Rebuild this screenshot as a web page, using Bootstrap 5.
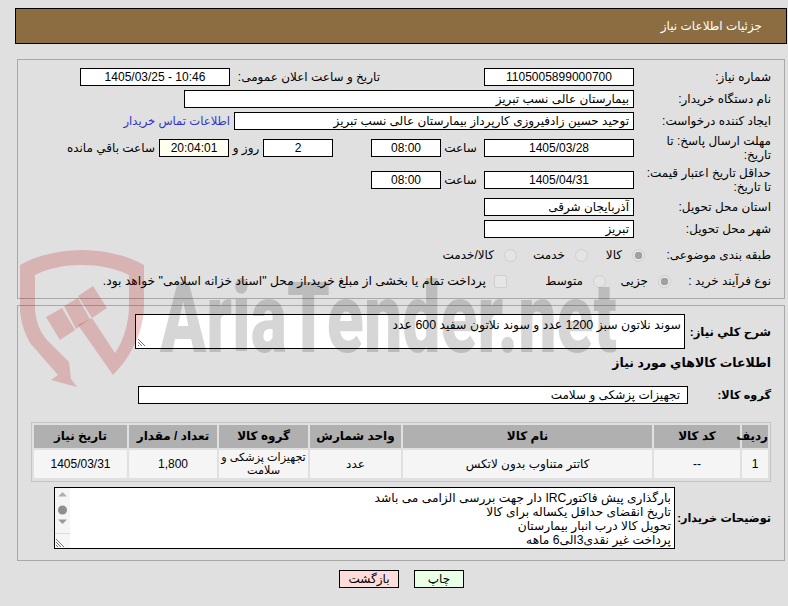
<!DOCTYPE html>
<html lang="fa" dir="rtl">
<head>
<meta charset="utf-8">
<title>جزئیات اطلاعات نیاز</title>
<link href="https://cdn.jsdelivr.net/npm/bootstrap@5.3.0/dist/css/bootstrap.min.css" rel="stylesheet">
<style>
html,body{height:606px;overflow:hidden}
body{background:#e0e0e0;color:#000;font-family:"Liberation Sans","DejaVu Sans",sans-serif;font-size:12px;line-height:14px;margin:0;position:relative;width:788px}
.page-head{background:#8c6d42;border:1px solid #000;color:#fff;height:36px;margin:8px 1px 0 15px;padding-inline-start:24px;font-size:12px}
.pane{border:1px solid #a8a8a8;margin-inline:3px 17px;position:relative}
.pane-a{height:240px;margin-top:15px;padding-top:8px}
.pane-b{height:256px;margin-top:6px;padding-top:8px}
.ln{display:flex;align-items:center;margin-bottom:4px;min-height:18px}
.ln-tall{min-height:28px}
.lbl{flex:none;width:150px;padding-inline-start:13px}
.lbl-bold{font-weight:700;font-size:11.3px;white-space:nowrap}
.lbl-wide{font-size:11.7px}
.bx{flex:none;background:#fff;border:1px solid #000;height:18px;line-height:16px;padding-inline:4px;overflow:hidden;white-space:nowrap}
.ctr{text-align:center}
.w-150{width:150px}.w-400{width:400px}.w-450{width:450px}.w-70{width:70px}
.gap-l{margin-inline-start:104px}
.lbl-mid{flex:none;width:150px;padding-inline-start:0}
.mm-4{margin-inline-start:4px}
.unit{flex:none;width:39px;padding-inline-start:0;text-align:center}
.after-bx{margin-inline-start:38px}
.roz{flex:none;width:34px;text-align:center}
.ylw{background:#fffff0}
.link-blue{color:#3333cc;text-decoration:none;margin-inline-start:4px;font-size:11.6px}
.opt-row{height:18px;margin-bottom:0}
.opt{flex:none;display:flex;align-items:center}
.rd{appearance:none;flex:none;width:13px;height:13px;border:1px solid #cfcfcf;border-radius:50%;background:#e4e4e4;margin:0 0 0 10px;position:relative}
.rd:checked{background:radial-gradient(circle,#a0a0a0 0 3.5px,#e4e4e4 4px)}
.cbx{appearance:none;flex:none;width:13px;height:13px;border:1px solid #cfcfcf;border-radius:2px;background:#e6e6e6;margin:0 0 0 8px}
.opt-long{font-size:12.3px}
.sub-title{font-weight:700;font-size:12.5px;padding-inline-start:13px;margin:7px 0 16px}
.txt-box{background:#fff;border:1px solid #000;position:relative;padding:3px 3px 0;flex:none;font-size:12.4px}
.ta-a{width:550px;height:35px;margin-inline-start:-51px}
.ta-b{width:621px;height:62px;margin-inline-start:-41px;font-size:12.2px}
.grip{position:absolute;left:1px;bottom:1px}
.bar{position:absolute;left:0;top:0;width:15px;height:100%;background:#f5f5f5}
.grid-wrap{border:1px solid #c4c4c4;margin-inline:13px 13px;margin-top:18px;margin-bottom:5px;height:60px;padding:0}
.tbl-x.table{border-collapse:separate;border-spacing:2px;margin:0;width:100%;table-layout:fixed;color:#000;font-size:12px}
.tbl-x.table>:not(caption)>*>*{background:#f5f5f5;border:0;padding:0;text-align:center;vertical-align:middle;line-height:13px;box-shadow:none;color:#000}
.tbl-x.table>thead>tr>th{background:#b0b0b0;height:23px;font-weight:700}
.tbl-x.table>tbody>tr>td{height:28px}
.tbl-x.table>tbody>tr>td.cell-tight{font-size:11.2px;white-space:nowrap}
.btn-row{display:flex;justify-content:flex-start;gap:15px;margin-top:9px;margin-inline-start:324px}
.act{border:1px solid #000;border-radius:0;height:18px;width:60px;padding:0;font-size:12px;line-height:14px;color:#000;font-family:inherit}
.act-pr{width:50px;background:#e9ffe6}
.act-bk{background:#ffdcdc}
.water{position:absolute;left:0;top:0;pointer-events:none}
.wm-t{font-family:Roboto,"Liberation Sans",sans-serif;font-weight:900;font-size:98px;fill:#000;fill-opacity:.16}
.wm-s{fill:#b40000;fill-opacity:.2}
</style>
</head>
<body>
<div class="page-head d-flex align-items-center">جزئیات اطلاعات نیاز</div>

<div class="pane pane-a">
  <div class="ln">
    <div class="lbl">شماره نیاز:</div>
    <div class="bx w-150 ctr">1105005899000700</div>
    <div class="lbl-mid gap-l">تاریخ و ساعت اعلان عمومی:</div>
    <div class="bx w-150 ctr" dir="ltr">1405/03/25 - 10:46</div>
  </div>
  <div class="ln">
    <div class="lbl">نام دستگاه خریدار:</div>
    <div class="bx w-450">بیمارستان عالی نسب تبریز</div>
  </div>
  <div class="ln">
    <div class="lbl">ایجاد کننده درخواست:</div>
    <div class="bx w-400">توحید حسین زادفیروزی کارپرداز بیمارستان عالی نسب تبریز</div>
    <a class="link-blue" href="#">اطلاعات تماس خریدار</a>
  </div>
  <div class="ln ln-tall">
    <div class="lbl">مهلت ارسال پاسخ: تا<br>تاریخ:</div>
    <div class="bx w-150 ctr">1405/03/28</div>
    <div class="unit mm-4">ساعت</div>
    <div class="bx w-70 ctr">08:00</div>
    <div class="bx w-70 ctr after-bx">2</div>
    <div class="roz">روز و</div>
    <div class="bx w-70 ctr ylw">20:04:01</div>
    <div class="mm-4">ساعت باقي مانده</div>
  </div>
  <div class="ln ln-tall">
    <div class="lbl">حداقل تاریخ اعتبار قیمت:<br>تا تاریخ:</div>
    <div class="bx w-150 ctr">1405/04/31</div>
    <div class="unit mm-4">ساعت</div>
    <div class="bx w-70 ctr">08:00</div>
  </div>
  <div class="ln">
    <div class="lbl">استان محل تحویل:</div>
    <div class="bx w-150">آذربایجان شرقی</div>
  </div>
  <div class="ln">
    <div class="lbl">شهر محل تحویل:</div>
    <div class="bx w-150">تبریز</div>
  </div>
  <div class="ln opt-row mt-2">
    <div class="lbl" style="width:139px">طبقه بندی موضوعی:</div>
    <label class="opt" style="width:57px"><input class="rd" type="radio" name="k" checked disabled>کالا</label>
    <label class="opt" style="width:71px"><input class="rd" type="radio" name="k" disabled>خدمت</label>
    <label class="opt"><input class="rd" type="radio" name="k" disabled>کالا/خدمت</label>
  </div>
  <div class="ln opt-row" style="margin-top:8px">
    <div class="lbl" style="width:113px">نوع فرآیند خرید :</div>
    <label class="opt" style="width:65px"><input class="rd" type="radio" name="n" checked disabled>جزیی</label>
    <label class="opt" style="width:99px"><input class="rd" type="radio" name="n" disabled>متوسط</label>
    <label class="opt opt-long"><input class="cbx" type="checkbox" disabled>پرداخت تمام یا بخشی از مبلغ خرید،از محل "اسناد خزانه اسلامی" خواهد بود.</label>
  </div>
</div>

<div class="pane pane-b">
  <div class="ln">
    <div class="lbl lbl-bold lbl-wide">شرح کلي نیاز:</div>
    <div class="txt-box ta-a">سوند نلاتون سبز 1200 عدد و سوند نلاتون سفید 600 عدد
      <svg class="grip" width="10" height="10" viewBox="0 0 10 10"><path d="M1 2l7 7M1 5l4 4M1 8l1 1" stroke="#777" fill="none"/></svg>
    </div>
  </div>
  <div class="sub-title">اطلاعات کالاهاي مورد نیاز</div>
  <div class="ln">
    <div class="lbl lbl-bold">گروه کالا:</div>
    <div class="bx" style="width:550px;margin-inline-start:-54px;padding-inline-start:7px">تجهیزات پزشکی و سلامت</div>
  </div>
  <div class="grid-wrap">
    <table class="table tbl-x">
      <colgroup><col style="width:26px"><col style="width:86px"><col style="width:249px"><col style="width:91px"><col style="width:89px"><col style="width:88px"><col></colgroup>
      <thead><tr><th>ردیف</th><th>کد کالا</th><th>نام کالا</th><th>واحد شمارش</th><th>گروه کالا</th><th>تعداد / مقدار</th><th>تاریخ نیاز</th></tr></thead>
      <tbody><tr><td>1</td><td>--</td><td>کاتتر متناوب بدون لاتکس</td><td>عدد</td><td class="cell-tight">تجهیزات پزشکی و<br>سلامت</td><td>1,800</td><td>1405/03/31</td></tr></tbody>
    </table>
  </div>
  <div class="ln mb-0">
    <div class="lbl lbl-bold">توضیحات خریدار:</div>
    <div class="txt-box ta-b">بارگذاری پیش فاکتورIRC دار جهت بررسی الزامی می باشد<br>تاریخ انقضای حداقل یکساله برای کالا<br>تحویل کالا درب انبار بیمارستان<br>پرداخت غیر نقدی3الی6 ماهه
      <svg class="bar" viewBox="0 0 15 60" preserveAspectRatio="none"><path d="M3 8.500l4.500-4.500 4.500 4.500z" fill="#b0b0b0"/><circle cx="7.500" cy="22" r="4.500" fill="#8e8e8e"/><path d="M3 31.500h9l-4.500 4.500z" fill="#9a9a9a"/><path d="M0 45.500h15" stroke="#ddd"/><path d="M1 51l8 8M1 54l5 5M1 57l2 2" stroke="#777" fill="none"/></svg>
    </div>
  </div>
</div>

<div class="btn-row">
  <button type="button" class="btn act act-pr">چاپ</button>
  <button type="button" class="btn act act-bk">بازگشت</button>
</div>

<svg class="water" width="788" height="606" viewBox="0 0 788 606" aria-hidden="true">
  <path class="wm-s" fill-rule="evenodd" d="M20 265C38 255 60 250 82 250C104 250 126 255 144 265V305C144 330 132 356 113 375L78 325L92 318L115 353C124 340 129 322 129 305V275C115 268 99 265 82 265C65 265 49 268 35 275V307C35 320 40 332 47 340L69 362L71 379L77 387L51 380L58 375L30 343C24 332 20 320 20 307Z"/>
  <path class="wm-s" d="M46 317L62 308L75 330L60 340ZM78 296L93 286L107 308L92 318ZM64 306L78 298L90 319L76 329Z"/>
  <text class="wm-t" x="160" y="352" textLength="457" lengthAdjust="spacingAndGlyphs" dir="ltr" direction="ltr" unicode-bidi="bidi-override">AriaTender.net</text>
</svg>
</body>
</html>
